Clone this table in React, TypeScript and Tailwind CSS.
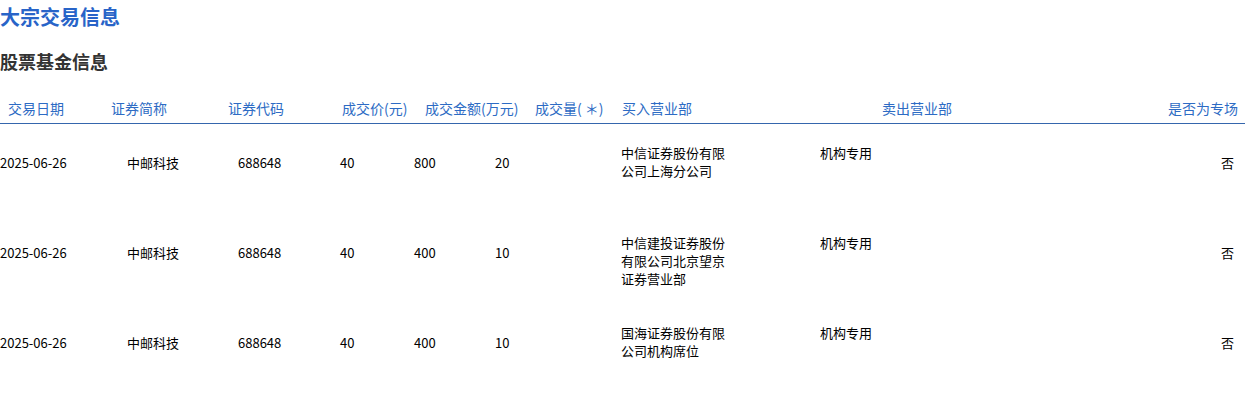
const rows = [
  { date: "2025-06-26", name: "中邮科技", code: "688648", price: "40", amount: "800", vol: "20", buyer: ["中信证券股份有限", "公司上海分公司"], seller: "机构专用", special: "否" },
  { date: "2025-06-26", name: "中邮科技", code: "688648", price: "40", amount: "400", vol: "10", buyer: ["中信建投证券股份", "有限公司北京望京", "证券营业部"], seller: "机构专用", special: "否" },
  { date: "2025-06-26", name: "中邮科技", code: "688648", price: "40", amount: "400", vol: "10", buyer: ["国海证券股份有限", "公司机构席位"], seller: "机构专用", special: "否" },
];

export default function App() {
  return (
    <div className="w-[1245px] h-[394px] bg-white overflow-hidden" style={{ fontFamily: '"Noto Sans CJK SC", "Noto Sans", sans-serif' }}>
      <div className="h-[34px] leading-[34px] text-[20px] font-bold text-[#2864c8]">大宗交易信息</div>
      <div className="mt-[13px] h-[28px] leading-[28px] text-[18px] font-bold text-[#333333]">股票基金信息</div>
      <div className="mt-[19px] h-[30px] flex items-center border-b border-[#3566ad] text-[14px] text-[#2d6bc4] pl-[8px] whitespace-nowrap">
        <div className="w-[103px]">交易日期</div>
        <div className="w-[117px]">证券简称</div>
        <div className="w-[114px]">证券代码</div>
        <div className="w-[83px]">成交价(元)</div>
        <div className="w-[110px]">成交金额(万元)</div>
        <div className="w-[87px]">成交量( ＊)</div>
        <div className="w-[260px]">买入营业部</div>
        <div className="w-[286px]">卖出营业部</div>
        <div className="flex-1">是否为专场</div>
      </div>
      {rows.map((r, i) => (
        <div key={i} className="h-[90px] flex items-start text-[13px] text-black leading-[18px] whitespace-nowrap">
          <div className="w-[127px] pt-[30px]">{r.date}</div>
          <div className="w-[111px] pt-[30px]">{r.name}</div>
          <div className="w-[102px] pt-[30px]">{r.code}</div>
          <div className="w-[74px] pt-[30px]">{r.price}</div>
          <div className="w-[81px] pt-[30px]">{r.amount}</div>
          <div className="w-[126px] pt-[30px]">{r.vol}</div>
          <div className="w-[199px] pt-[20px]">
            {r.buyer.map((l, j) => (
              <div key={j}>{l}</div>
            ))}
          </div>
          <div className="w-[200px] pt-[20px]">{r.seller}</div>
          <div className="flex-1 pt-[30px] pr-[11px] text-right">{r.special}</div>
        </div>
      ))}
    </div>
  );
}
